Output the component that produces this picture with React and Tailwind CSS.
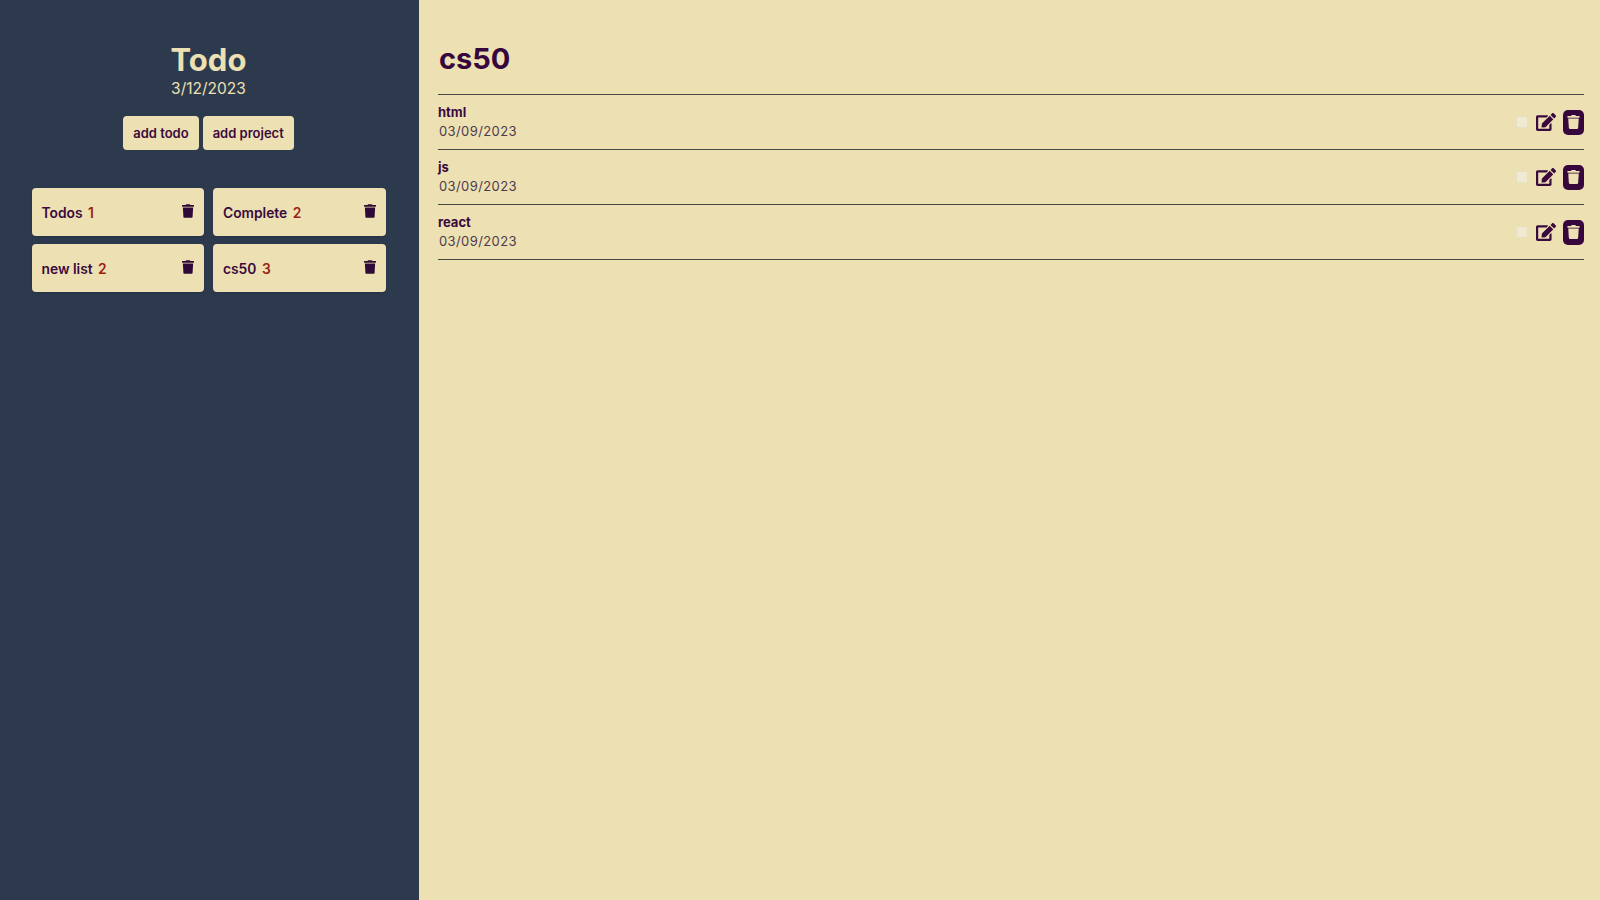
import React from "react";
import { FaTrash, FaEdit } from "react-icons/fa";

function Card({ name, count }) {
  return (
    <div className="flex h-[47.5px] items-center justify-between rounded-[4px] bg-[#ede0b2] pl-2.5 pr-2.5 shadow-sm">
      <div className="pt-[3px] text-[13.8px] font-semibold text-[#3a0a3e]">
        {name} <span className="ml-0.5 text-[#9b2212]">{count}</span>
      </div>
      <FaTrash className="h-[14px] w-[12px] -translate-y-px text-[#2f0a38]" />
    </div>
  );
}

function Row({ name }) {
  return (
    <div className="flex h-[55px] items-center justify-between border-b border-[#4a4a45]">
      <div className="flex flex-col">
        <span className="text-[13px] leading-[19px] font-bold text-[#3a0a3e]">{name}</span>
        <span className="ml-px text-[13px] leading-[19px] tracking-[0.4px] text-[#4d3a4c]">03/09/2023</span>
      </div>
      <div className="flex items-center">
        <div className="h-[12px] w-[12px] rounded-[2px] border border-[#e6e0c4] bg-[#f0ead2]" />
        <FaEdit className="ml-[8px] h-[20px] w-[20px] text-[#3a0a3e]" />
        <div className="ml-[7px] flex h-[25px] w-[21px] items-center justify-center rounded-[5px] bg-[#36063d]">
          <FaTrash className="h-[14px] w-[13px] text-[#ede0b2]" />
        </div>
      </div>
    </div>
  );
}

export default function App() {
  return (
    <div className="flex h-[900px] w-full bg-[#ede0b2] font-['Inter',sans-serif]">
      <aside className="flex w-[419px] shrink-0 flex-col items-center bg-[#2d3a4d] pt-[42px]">
        <h1 className="-translate-x-px text-[31px] leading-9 font-bold text-[#ede0b2]">Todo</h1>
        <p className="-translate-x-px text-[15.5px] leading-[22px] text-[#ede0b2]">3/12/2023</p>
        <div className="mt-[16px] flex -translate-x-px gap-1">
          <button className="h-[34px] rounded-[4px] bg-[#ede0b2] px-2.5 pt-px text-[13px] font-semibold text-[#3a0a3e]">add todo</button>
          <button className="h-[34px] rounded-[4px] bg-[#ede0b2] px-2.5 pt-px text-[13px] font-semibold text-[#3a0a3e]">add project</button>
        </div>
        <div className="mt-[38px] grid w-[354px] -translate-x-px grid-cols-2 gap-x-[9px] gap-y-[8.5px]">
          <Card name="Todos" count="1" />
          <Card name="Complete" count="2" />
          <Card name="new list" count="2" />
          <Card name="cs50" count="3" />
        </div>
      </aside>
      <main className="flex-1 pl-[19px] pr-[16px] pt-[40px]">
        <h2 className="h-[55px] border-b border-[#4a4a45] pl-px text-[29px] leading-[38px] font-bold text-[#36063d]">cs50</h2>
        <Row name="html" />
        <Row name="js" />
        <Row name="react" />
      </main>
    </div>
  );
}
